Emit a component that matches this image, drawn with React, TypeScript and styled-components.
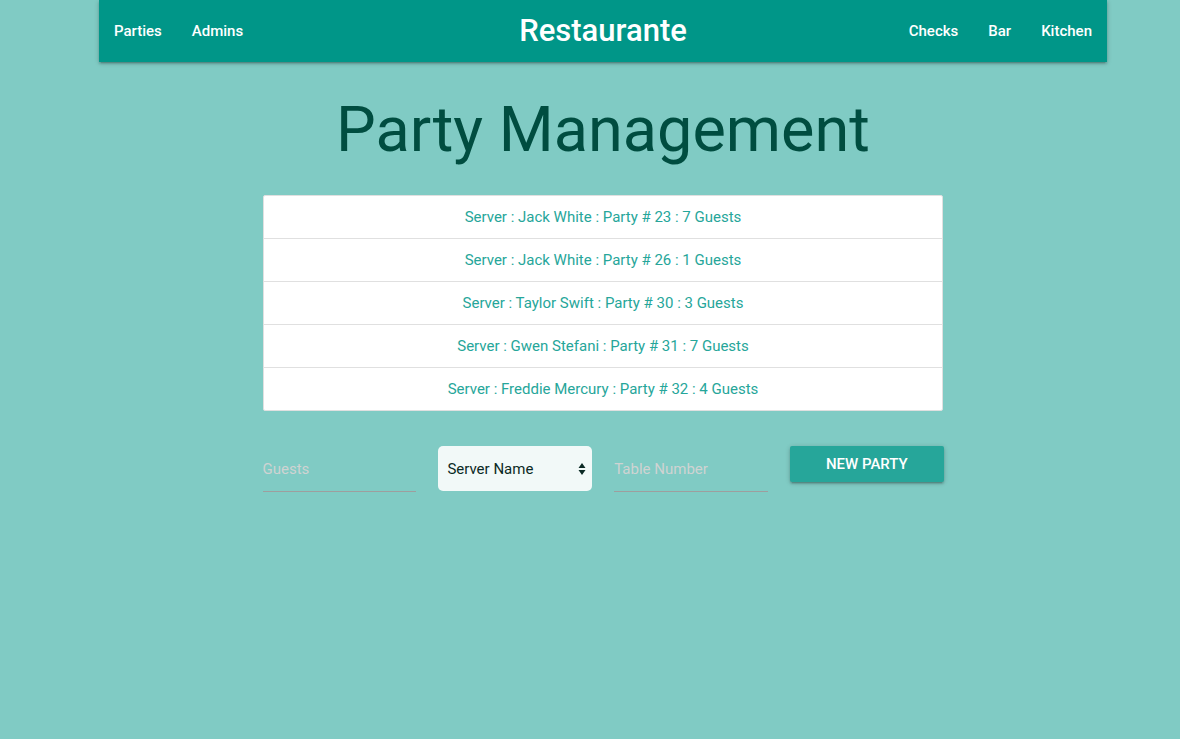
import React from "react";
import styled, { createGlobalStyle } from "styled-components";

const Global = createGlobalStyle`
  html, body { margin: 0; padding: 0; }
  body {
    background: #80cbc4;
    font-family: Roboto, "Liberation Sans", sans-serif;
    min-height: 739px;
  }
`;

const Page = styled.div`
  width: 1008px;
  margin-left: 99px;
`;

const Nav = styled.nav`
  height: 62px;
  background: #009688;
  display: grid;
  grid-template-columns: 1fr auto 1fr;
  align-items: center;
  box-shadow: 0 2px 2px 0 rgba(0,0,0,0.14), 0 3px 1px -2px rgba(0,0,0,0.12), 0 1px 5px 0 rgba(0,0,0,0.2);
`;

const Links = styled.div<{ $right?: boolean }>`
  display: flex;
  justify-content: ${(p) => (p.$right ? "flex-end" : "flex-start")};
`;

const NavLink = styled.a`
  color: #fff;
  font-size: 15px;
  font-weight: 500;
  padding: 0 15px;
  text-decoration: none;
  line-height: 56px;
`;

const Brand = styled.div`
  color: #fff;
  font-size: 31px;
  font-weight: 500;
  line-height: 54px;
`;

const Title = styled.h1`
  margin: 28px 0 0;
  text-align: center;
  font-weight: 400;
  font-size: 63px;
  line-height: 80px;
  color: #004d40;
`;

const List = styled.ul`
  list-style: none;
  margin: 25px auto 0;
  padding: 0;
  width: 678px;
  background: #fff;
  border: 1px solid #e0e0e0;
  border-radius: 2px;
`;

const Item = styled.li`
  height: 42px;
  line-height: 42px;
  text-align: center;
  font-size: 15px;
  color: #26a69a;
  & + & { border-top: 1px solid #e0e0e0; }
`;

const Form = styled.div`
  width: 681px;
  margin: 35px auto 0;
  display: grid;
  grid-template-columns: repeat(4, 1fr);
  column-gap: 22.5px;
  align-items: start;
`;

const Input = styled.input`
  box-sizing: border-box;
  width: 100%;
  height: 46px;
  border: none;
  border-bottom: 1px solid #9e9e9e;
  background: transparent;
  outline: none;
  padding: 0;
  font-family: Roboto, sans-serif;
  font-size: 15px;
  color: #333;
  &::placeholder { color: #cfd3d2; }
`;

const SelectBox = styled.div`
  box-sizing: border-box;
  height: 45px;
  background: #f2f9f8;
  border-radius: 5px;
  display: flex;
  align-items: center;
  justify-content: space-between;
  padding: 0 6px 0 9px;
  font-size: 15px;
  color: #0b2a25;
`;

const Button = styled.button`
  height: 36px;
  border: none;
  border-radius: 2px;
  background: #26a69a;
  color: #fff;
  font-family: Roboto, sans-serif;
  font-size: 15px;
  font-weight: 500;
  text-transform: uppercase;
  box-shadow: 0 2px 2px 0 rgba(0,0,0,0.14), 0 3px 1px -2px rgba(0,0,0,0.12), 0 1px 5px 0 rgba(0,0,0,0.2);
`;

const parties = [
  "Server : Jack White : Party # 23 : 7 Guests",
  "Server : Jack White : Party # 26 : 1 Guests",
  "Server : Taylor Swift : Party # 30 : 3 Guests",
  "Server : Gwen Stefani : Party # 31 : 7 Guests",
  "Server : Freddie Mercury : Party # 32 : 4 Guests",
];

export default function App() {
  return (
    <>
      <Global />
      <Page>
        <Nav>
          <Links>
            <NavLink>Parties</NavLink>
            <NavLink>Admins</NavLink>
          </Links>
          <Brand>Restaurante</Brand>
          <Links $right>
            <NavLink>Checks</NavLink>
            <NavLink>Bar</NavLink>
            <NavLink>Kitchen</NavLink>
          </Links>
        </Nav>
        <Title>Party Management</Title>
        <List>
          {parties.map((p) => (
            <Item key={p}>{p}</Item>
          ))}
        </List>
        <Form>
          <Input placeholder="Guests" />
          <SelectBox>
            <span>Server Name</span>
            <svg width="8" height="14" viewBox="0 0 8 14">
              <path d="M4 1 L7.5 6 H0.5 Z M4 13 L0.5 8 H7.5 Z" fill="#0b2a25" />
            </svg>
          </SelectBox>
          <Input placeholder="Table Number" />
          <Button>New Party</Button>
        </Form>
      </Page>
    </>
  );
}
